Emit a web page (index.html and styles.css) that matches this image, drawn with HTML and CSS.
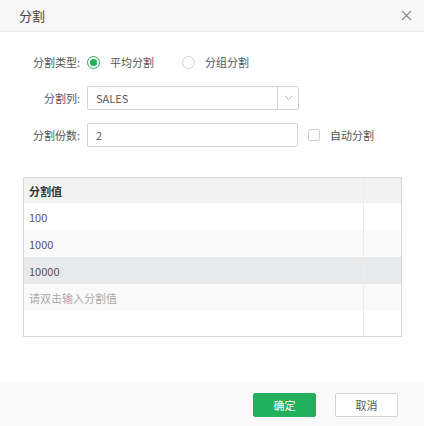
FILE: index.html
```html
<!DOCTYPE html>
<html lang="zh">
<head>
<meta charset="utf-8">
<link rel="stylesheet" href="styles.css">
</head>
<body>
<div class="dialog">
  <div class="header">
    <span class="title">分割</span>
    <svg class="close" width="11" height="11" viewBox="0 0 11 11"><path d="M1 1L10 10M10 1L1 10" stroke="#888" stroke-width="1.1" fill="none"/></svg>
  </div>
  <div class="body">
    <div class="form">
      <div class="label">分割类型:</div>
      <div class="ctrl radios">
        <span class="radio checked"><span class="dot"></span></span><span class="rtext">平均分割</span>
        <span class="radio second"></span><span class="rtext">分组分割</span>
      </div>
      <div class="label">分割列:</div>
      <div class="ctrl">
        <div class="select"><span class="sval">SALES</span><span class="sbtn"><svg width="9" height="6" viewBox="0 0 9 6"><path d="M1 1L4.5 4.5L8 1" stroke="#b5b5b5" stroke-width="1" fill="none"/></svg></span></div>
      </div>
      <div class="label">分割份数:</div>
      <div class="ctrl">
        <div class="input">2</div>
        <span class="checkbox"></span><span class="ctext">自动分割</span>
      </div>
    </div>
    <div class="table">
      <div class="row head"><div class="c1">分割值</div><div class="c2"></div></div>
      <div class="row"><div class="c1">100</div><div class="c2"></div></div>
      <div class="row alt"><div class="c1">1000</div><div class="c2"></div></div>
      <div class="row sel"><div class="c1">10000</div><div class="c2"></div></div>
      <div class="row alt ph"><div class="c1">请双击输入分割值</div><div class="c2"></div></div>
      <div class="row fill"><div class="c1"></div><div class="c2"></div></div>
    </div>
  </div>
  <div class="footer">
    <button class="btn ok">确定</button>
    <button class="btn cancel">取消</button>
  </div>
</div>
</body>
</html>
```
FILE: styles.css
```css
* { box-sizing: border-box; }
html, body { margin: 0; padding: 0; background: #fff; }
body { font-family: "Noto Sans CJK SC", "Noto Sans", sans-serif; font-size: 11px; color: #555; }
.dialog { width: 424px; height: 426px; display: flex; flex-direction: column; }
.header { height: 32px; background: #f7f7f7; border-bottom: 1px solid #ebebeb; display: flex; align-items: center; justify-content: space-between; padding: 0 12px 0 19px; }
.title { font-size: 13px; color: #444; }
.close { display: block; }
.body { flex: 1; padding-top: 18px; }
.form { display: grid; grid-template-columns: 60px 1fr; column-gap: 7px; row-gap: 12px; padding-left: 20px; }
.label { text-align: right; height: 24px; line-height: 24px; color: #555; }
.ctrl { display: flex; align-items: center; height: 24px; }
.radio { width: 13px; height: 13px; border-radius: 50%; border: 1px solid #cfcfcf; display: inline-flex; align-items: center; justify-content: center; }
.radio.checked { border-color: #22b05c; }
.radio .dot { width: 7px; height: 7px; border-radius: 50%; background: #22b05c; }
.radio.second { margin-left: 28px; }
.rtext { margin-left: 10px; color: #555; }
.select { width: 212px; height: 24px; border: 1px solid #d3d3d3; border-radius: 2px; display: flex; }
.sval { flex: 1; padding-left: 8px; line-height: 22px; color: #555; }
.sbtn { width: 21px; border-left: 1px solid #d3d3d3; display: flex; align-items: center; justify-content: center; }
.input { width: 211px; height: 24px; border: 1px solid #d3d3d3; border-radius: 2px; padding-left: 8px; line-height: 22px; color: #555; }
.checkbox { width: 12px; height: 12px; border: 1px solid #cfcfcf; border-radius: 2px; margin-left: 10px; }
.ctext { margin-left: 10px; color: #555; }
.form > :nth-child(5), .form > :nth-child(6) { margin-top: 1px; }
.table { margin: 30px 0 0 23px; width: 379px; border: 1px solid #d8d8d8; height: 160px; display: flex; flex-direction: column; }
.row { display: flex; height: 27px; }
.row .c1 { flex: 1; padding: 2px 0 0 5px; line-height: 25px; color: #555; }
.row .c2 { width: 38px; border-left: 1px solid #ececec; }
.row.head { height: 25px; background: #f2f2f2; }
.row.head .c1 { padding-top: 1px; line-height: 24px; font-weight: bold; color: #333; }
.row.alt { background: #fafafa; }
.row.sel { background: #e8e9ea; }
.row.ph .c1 { color: #aaa; }
.row.fill { flex: 1; }
.footer { height: 43px; background: #fafafa; display: flex; justify-content: flex-end; align-items: flex-start; padding: 10px 26px 0 0; gap: 19px; }
.btn { width: 63px; height: 24px; font-family: inherit; font-size: 11px; border-radius: 2px; padding: 0; cursor: pointer; }
.btn.ok { background: #22b05c; border: 1px solid #22b05c; color: #fff; }
.btn.cancel { background: #fff; border: 1px solid #d3d3d3; color: #555; }
```
